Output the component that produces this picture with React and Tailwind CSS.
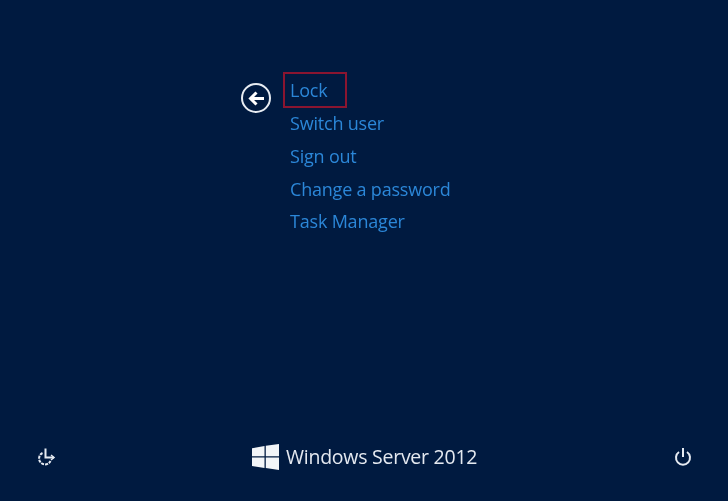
import React from 'react'

const ITEMS = ['Switch user', 'Sign out', 'Change a password', 'Task Manager']

export default function App() {
  return (
    <div className="w-[728px] h-[501px] overflow-hidden flex flex-col justify-between bg-[#001a40] font-['Open_Sans','Noto_Sans',sans-serif]">
      {/* Security options */}
      <div className="flex items-start pt-[72px] pl-[241px]">
        <button className="mt-[11px] w-[30px] h-[30px] rounded-full border-2 border-[#e8edf3] flex items-center justify-center blur-[0.5px]">
          <svg width="17" height="15" viewBox="0 0 17 15" fill="none" stroke="#ffffff" strokeWidth="3">
            <path d="M16 7.5H3" />
            <path d="M8.5 1.5L2.5 7.5l6 6" />
          </svg>
        </button>
        <div className="ml-[12px] flex flex-col text-[18px] leading-[32.8px] text-[#2b87d8] tracking-[-0.2px] blur-[0.5px]">
          <div className="w-[64px] h-[36px] border-2 border-[#8a1530] pl-[5px] leading-[33px] mb-[-1px]">Lock</div>
          {ITEMS.map((item) => (
            <div key={item} className="pl-[7px] whitespace-nowrap">{item}</div>
          ))}
        </div>
      </div>

      {/* Bottom bar */}
      <div className="flex items-center justify-between pb-[30px] px-[36px]">
        <svg className="blur-[0.4px]" width="20" height="20" viewBox="0 0 20 20" fill="none" stroke="#e6ebf2" strokeWidth="2">
          <path d="M6.5 6a6 6 0 1 0 8 8" strokeDasharray="3 1" />
          <path d="M9.5 1.5v9h8" />
          <path d="M15 8l3 2.5-3 2.5" strokeWidth="1.5" />
        </svg>
        <div className="flex items-center blur-[0.5px]">
          <svg width="27" height="26" viewBox="0 0 27 26" fill="#f2f5f8">
            <path d="M0 4.2L12.5 2v10.3H0z" />
            <path d="M13.8 1.8L27 0v12.3H13.8z" />
            <path d="M0 13.6h12.5V24L0 22z" />
            <path d="M13.8 13.6H27V26l-13.2-2z" />
          </svg>
          <span className="ml-[7px] w-[192px] text-[19.5px] leading-[28px] text-[#e4e9f0] tracking-[-0.25px] whitespace-nowrap">Windows Server 2012</span>
        </div>
        <svg className="blur-[0.4px]" width="18" height="20" viewBox="0 0 18 20" fill="none" stroke="#e6ebf2" strokeWidth="2">
          <path d="M9 1v9" />
          <path d="M5 5a7 7 0 1 0 8 0" />
        </svg>
      </div>
    </div>
  )
}
